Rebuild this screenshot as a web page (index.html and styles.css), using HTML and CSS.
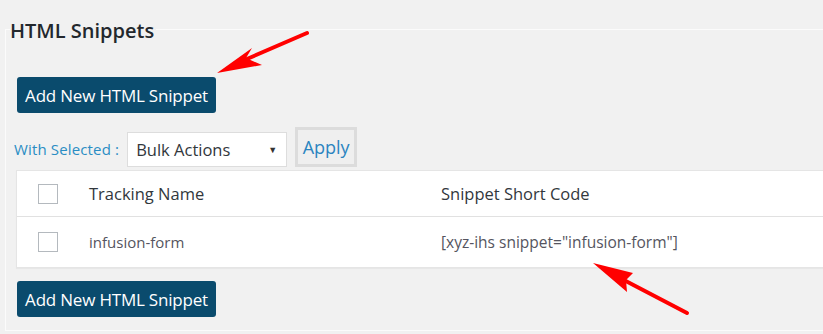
FILE: index.html
```html
<!DOCTYPE html>
<html>
<head>
<meta charset="utf-8">
<link rel="stylesheet" href="styles.css">
</head>
<body>
<div class="panel">
  <h2 class="title"><span>HTML Snippets</span></h2>
  <a class="btn btn-top">Add New HTML Snippet</a>
  <div class="toolbar">
    <span class="with-label">With Selected :</span>
    <div class="select"><span>Bulk Actions</span><span class="caret">&#9660;</span></div>
    <span class="apply">Apply</span>
  </div>
  <div class="table">
    <div class="row head">
      <div class="cell cb"><span class="check"></span></div>
      <div class="cell name">Tracking Name</div>
      <div class="cell code">Snippet Short Code</div>
    </div>
    <div class="row body-row">
      <div class="cell cb"><span class="check"></span></div>
      <div class="cell name">infusion-form</div>
      <div class="cell code">[xyz-ihs snippet="infusion-form"]</div>
    </div>
  </div>
  <a class="btn btn-bottom">Add New HTML Snippet</a>
</div>
<svg class="arrows" width="823" height="334" viewBox="0 0 823 334">
  <line x1="307" y1="33" x2="240" y2="62" stroke="#ff0000" stroke-width="4" stroke-linecap="round"/>
  <polygon points="217,73 252,48 246,58 262,65" fill="#ff0000"/>
  <line x1="687" y1="313" x2="620" y2="278" stroke="#ff0000" stroke-width="4" stroke-linecap="round"/>
  <polygon points="593,263 633,273 626,280 627,292" fill="#ff0000"/>
</svg>
</body>
</html>
```
FILE: styles.css
```css
html, body {
  margin: 0;
  padding: 0;
  background: #f1f1f1;
  overflow: hidden;
  width: 823px;
  height: 334px;
  font-family: "Open Sans", "Noto Sans", sans-serif;
}
.panel {
  margin: 29px 0 0 5px;
  width: 840px;
  height: 302px;
  border: 1px solid #fbfbfb;
  border-right: 0;
  box-sizing: border-box;
  display: flex;
  flex-direction: column;
  align-items: flex-start;
}
.title {
  margin: -11px 0 0 4px;
  font-size: 20px;
  line-height: 24px;
  font-weight: 600;
  color: #23282d;
}
.title span {
  background: #f1f1f1;
  padding-right: 2px;
}
.btn {
  display: flex;
  align-items: center;
  justify-content: center;
  width: 199px;
  height: 36px;
  box-sizing: border-box;
  background: #0a4b6d;
  color: #ffffff;
  border-radius: 3px;
  font-size: 17px;
  letter-spacing: -0.2px;
  margin-left: 11px;
}
.btn-top {
  margin-top: 34px;
}
.toolbar {
  display: flex;
  align-items: center;
  margin: 14px 0 0 8px;
  height: 40px;
}
.with-label {
  color: #2a8dc4;
  font-size: 15px;
  letter-spacing: 0.15px;
  margin-right: 8px;
  margin-top: 4px;
}
.select {
  width: 160px;
  height: 35px;
  box-sizing: border-box;
  border: 1px solid #dddddd;
  background: #ffffff;
  display: flex;
  align-items: center;
  justify-content: space-between;
  padding: 0 9px 0 8px;
  font-size: 16.5px;
  color: #32373c;
  margin-top: 5px;
}
.caret {
  font-size: 9px;
  color: #333;
}
.apply {
  margin-left: 8px;
  width: 62px;
  height: 40px;
  box-sizing: border-box;
  border: 3px solid #dcdcdc;
  background: #efefef;
  color: #2a84c0;
  font-size: 18px;
  display: flex;
  align-items: center;
  justify-content: center;
}
.table {
  margin: 3px 0 0 10px;
  width: 820px;
  background: #ffffff;
  border: 1px solid #e5e5e5;
  border-right: 0;
  box-sizing: border-box;
  box-shadow: 0 1px 1px rgba(0,0,0,0.04);
}
.row {
  display: flex;
  align-items: center;
}
.head {
  height: 45px;
  border-bottom: 1px solid #e1e1e1;
  font-size: 16.5px;
}
.body-row {
  height: 50px;
  font-size: 15px;
}
.cb {
  width: 72px;
  display: flex;
  padding-left: 21px;
  box-sizing: border-box;
}
.check {
  display: block;
  width: 20px;
  height: 20px;
  box-sizing: border-box;
  border: 1px solid #b4b9be;
  background: #ffffff;
}
.name {
  width: 352px;
  color: #32373c;
}
.code {
  color: #32373c;
}
.body-row .name,
.body-row .code {
  color: #555560;
}
.body-row .code {
  font-size: 15.5px;
}
.btn-bottom {
  margin-top: 13px;
}
.arrows {
  position: absolute;
  left: 0;
  top: 0;
}
```
